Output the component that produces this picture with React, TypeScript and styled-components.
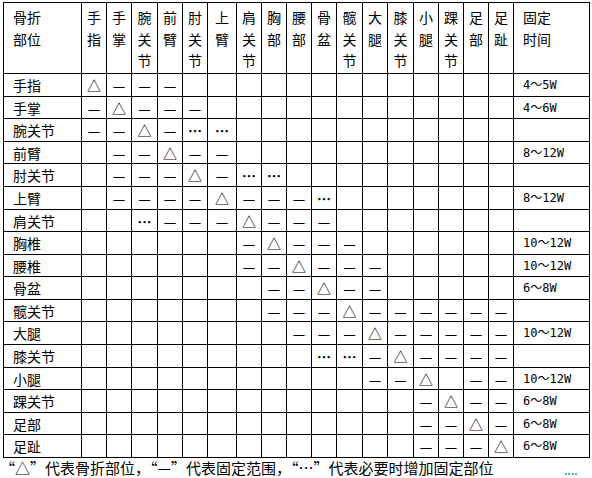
import React from "react";
import styled, { createGlobalStyle } from "styled-components";

const GlobalStyle = createGlobalStyle`
  html, body {
    margin: 0;
    padding: 0;
    background: #fff;
  }
  body {
    font-family: "Noto Sans CJK SC", "Noto Sans", sans-serif;
    color: #000;
  }
`;

const columns = [
  "手指", "手掌", "腕关节", "前臂", "肘关节", "上臂", "肩关节", "胸部", "腰部",
  "骨盆", "髋关节", "大腿", "膝关节", "小腿", "踝关节", "足部", "足趾",
];

const colWidths = [78, 25, 25, 26, 25, 25, 29, 25, 25, 25, 25, 26, 25, 26, 25, 25, 25, 25, 76];

// T = 骨折部位, - = 固定范围, . = 必要时增加
const rows: { name: string; marks: string; time: string }[] = [
  { name: "手指", marks: "T---", time: "4～5W" },
  { name: "手掌", marks: "-T---", time: "4～6W" },
  { name: "腕关节", marks: "--T-..", time: "" },
  { name: "前臂", marks: " --T--", time: "8～12W" },
  { name: "肘关节", marks: " ---T-..", time: "" },
  { name: "上臂", marks: " ----T---.", time: "8～12W" },
  { name: "肩关节", marks: "  .---T---", time: "" },
  { name: "胸椎", marks: "      -T---", time: "10～12W" },
  { name: "腰椎", marks: "      --T---", time: "10～12W" },
  { name: "骨盆", marks: "       --T--", time: "6～8W" },
  { name: "髋关节", marks: "       ---T------", time: "" },
  { name: "大腿", marks: "        ---T-----", time: "10～12W" },
  { name: "膝关节", marks: "         ..-T----", time: "" },
  { name: "小腿", marks: "           --T --", time: "10～12W" },
  { name: "踝关节", marks: "             -T--", time: "6～8W" },
  { name: "足部", marks: "             --T-", time: "6～8W" },
  { name: "足趾", marks: "             ---T", time: "6～8W" },
];

const symbol: Record<string, string> = { T: "△", "-": "—", ".": "…", " ": "" };

const Page = styled.div`
  position: relative;
  padding-top: 2px;
  width: 592px;
  height: 478px;
  overflow: hidden;
  box-sizing: border-box;
`;

const Grid = styled.div<{ $cols: string; $rows: string }>`
  display: grid;
  grid-template-columns: ${(p) => p.$cols};
  grid-template-rows: ${(p) => p.$rows};
  margin-left: 3px;
  width: max-content;
  border-left: 1px solid #000;
  border-top: 1px solid #000;
`;

const Cell = styled.div`
  box-sizing: border-box;
  border-right: 1px solid #000;
  border-bottom: 1px solid #000;
  display: flex;
  align-items: center;
  justify-content: center;
  font-size: 14px;
  line-height: 1;
`;

const HeadCell = styled(Cell)<{ $left?: boolean }>`
  flex-direction: column;
  align-items: ${(p) => (p.$left ? "flex-start" : "center")};
  justify-content: flex-start;
  padding-top: 4px;
  padding-left: ${(p) => (p.$left ? "9px" : "0")};
  line-height: 21.5px;
`;

const NameCell = styled(Cell)`
  justify-content: flex-start;
  padding-left: 9px;
`;

const MarkCell = styled(Cell)<{ $dots?: boolean }>`
  font-size: 14px;
  font-weight: ${(p) => (p.$dots ? 700 : 400)};
`;

const TimeCell = styled(Cell)`
  justify-content: flex-start;
  padding-left: 9px;
  font-family: "DejaVu Sans Mono", "Noto Sans CJK SC", monospace;
  font-size: 12px;
`;

const Note = styled.div`
  font-size: 15px;
  line-height: 20px;
  white-space: nowrap;
`;

const Watermark = styled.span`
  position: absolute;
  left: 565px;
  top: 473px;
  width: 12px;
  height: 5px;
  border-top: 2px dotted #5db8ae;
  box-sizing: border-box;
`;

function buildRows() {
  const heights: number[] = [71];
  let prev = 73;
  for (let i = 1; i <= rows.length; i++) {
    const next = Math.round(73 + (i * 384) / rows.length);
    heights.push(next - prev);
    prev = next;
  }
  return heights.map((h) => `${h}px`).join(" ");
}

export default function App() {
  const cols = colWidths.map((w) => `${w}px`).join(" ");
  return (
    <Page>
      <GlobalStyle />
      <Grid $cols={cols} $rows={buildRows()}>
        <HeadCell $left>
          <span>骨折</span>
          <span>部位</span>
        </HeadCell>
        {columns.map((c) => (
          <HeadCell key={c}>
            {c.split("").map((ch, i) => (
              <span key={i}>{ch}</span>
            ))}
          </HeadCell>
        ))}
        <HeadCell $left>
          <span>固定</span>
          <span>时间</span>
        </HeadCell>
        {rows.map((r) => (
          <React.Fragment key={r.name}>
            <NameCell>{r.name}</NameCell>
            {r.marks
              .padEnd(columns.length, " ")
              .split("")
              .map((m, i) => (
                <MarkCell key={i} $dots={m === "."}>
                  {symbol[m]}
                </MarkCell>
              ))}
            <TimeCell>{r.time}</TimeCell>
          </React.Fragment>
        ))}
      </Grid>
      <Note>“△”代表骨折部位，“—”代表固定范围，“…”代表必要时增加固定部位</Note>
      <Watermark />
    </Page>
  );
}
